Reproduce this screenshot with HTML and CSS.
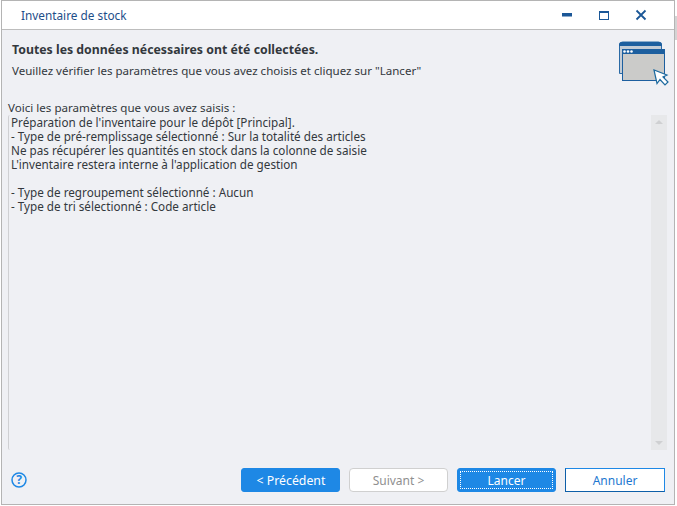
FILE: index.html
```html
<!DOCTYPE html>
<html lang="fr">
<head>
<meta charset="utf-8">
<title>Inventaire de stock</title>
<link rel="stylesheet" href="styles.css">
</head>
<body>
<div class="window">
  <header class="titlebar">
    <span class="title">Inventaire de stock</span>
    <div class="controls">
      <svg class="ctl" width="16" height="16" viewBox="0 0 16 16"><rect x="1" y="6" width="10" height="3.500" fill="#1b5797"/></svg>
      <svg class="ctl" width="16" height="16" viewBox="0 0 16 16"><rect x="1.500" y="4.500" width="9" height="8" fill="none" stroke="#1b5797"/><rect x="1" y="4" width="10" height="2" fill="#1b5797"/></svg>
      <svg class="ctl" width="16" height="16" viewBox="0 0 16 16"><path d="M1.500 3.500 L10.500 12.500 M10.500 3.500 L1.500 12.500" stroke="#1b5797" stroke-width="1.800" fill="none"/></svg>
    </div>
  </header>
  <section class="intro">
    <div class="intro-text">
      <h1 class="heading">Toutes les données nécessaires ont été collectées.</h1>
      <p class="sub">Veuillez vérifier les paramètres que vous avez choisis et cliquez sur "Lancer"</p>
    </div>
    <svg class="wizard-icon" width="50" height="46" viewBox="0 0 50 46">
      <path d="M0.500 5 q0-3 3-3 h36 q3 0 3 3 v28.500 h-42z" fill="#c3ccd6" stroke="#2a6aa5"/>
      <path d="M0 5 q0-3 3-3 h37 q3 0 3 3 v1 H0z" fill="#1d5f9f"/>
      <rect x="3.500" y="9.500" width="42" height="31" fill="#cbcbc9" stroke="#1d5f9f"/>
      <rect x="3" y="9" width="43" height="5" fill="#1d5f9f"/>
      <circle cx="5.500" cy="11.500" r="1.300" fill="#fff"/><circle cx="9" cy="11.500" r="1.300" fill="#fff"/><circle cx="12.500" cy="11.500" r="1.300" fill="#fff"/>
      <path d="M35 30 L38 43.500 L41 39.500 L46 45 L49 42 L44 37 L48 35Z" fill="#fff" stroke="#1d6a9f" stroke-width="1.200"/>
    </svg>
  </section>
  <p class="label">Voici les paramètres que vous avez saisis :</p>
  <div class="panel">
    <div class="content">
      <div>Préparation de l'inventaire pour le dépôt [Principal].</div>
      <div>- Type de pré-remplissage sélectionné : Sur la totalité des articles</div>
      <div>Ne pas récupérer les quantités en stock dans la colonne de saisie</div>
      <div>L'inventaire restera interne à l'application de gestion</div>
      <div>&nbsp;</div>
      <div>- Type de regroupement sélectionné : Aucun</div>
      <div>- Type de tri sélectionné : Code article</div>
    </div>
    <div class="scrollbar">
      <span class="arrow up"></span>
      <span class="arrow down"></span>
    </div>
  </div>
  <footer class="footer">
    <svg class="help" width="18" height="18" viewBox="0 0 18 18"><circle cx="9" cy="9" r="7" fill="none" stroke="#1e88e5" stroke-width="1.500"/><text class="help-mark" x="9" y="13" text-anchor="middle">?</text></svg>
    <div class="buttons">
      <button class="btn primary wide">&lt; Précédent</button>
      <button class="btn disabled">Suivant &gt;</button>
      <button class="btn primary focused"><span class="focus-ring">Lancer</span></button>
      <button class="btn outline">Annuler</button>
    </div>
  </footer>
</div>
<div class="edge-scrap"></div>
</body>
</html>
```
FILE: styles.css
```css
* { box-sizing: border-box; }
html, body { margin: 0; padding: 0; background: #fff; }
body { position: relative; width: 677px; height: 506px; overflow: hidden; font-family: "Noto Sans", sans-serif; font-size: 11.700px; color: #33383d; }
.window { margin: 0 2px 0 1px; width: 674px; height: 505px; background: #eff0f4; border: 1px solid #b4b4b4; display: flex; flex-direction: column; }
.edge-scrap { position: absolute; left: 675px; top: 16px; width: 2px; height: 24px; background: #d4d4d4; }
.titlebar { height: 29px; background: #fff; border-bottom: 1px solid #bdbdbd; display: flex; align-items: center; justify-content: space-between; padding-left: 19px; flex: none; }
.title { color: #1d4e89; font-size: 11.800px; }
.controls { display: flex; gap: 21px; padding-right: 23px; }
.ctl { display: block; }
.intro { height: 70px; flex: none; display: flex; justify-content: space-between; padding: 11px 5px 0 10px; }
.heading { margin: 0; font-size: 12.300px; font-weight: 700; line-height: 17px; color: #33383d; }
.sub { margin: 4px 0 0; line-height: 17px; font-size: 11.550px; }
.wizard-icon { display: block; margin-top: -1px; }
.label { margin: 0; padding: 1px 0 0 6px; height: 15px; line-height: 14px; flex: none; font-size: 11.600px; }
.panel { flex: none; height: 335px; margin: 0 6px; display: flex; border-left: 1px solid #cfd0d3; border-radius: 2px 0 0 2px; }
.content { flex: 1; padding: 0 0 0 2px; line-height: 14px; }
.scrollbar { width: 16px; margin-right: 1px; background: #e7e8ea; display: flex; flex-direction: column; justify-content: space-between; align-items: center; padding: 5px 0; }
.arrow { width: 0; height: 0; border-left: 4px solid transparent; border-right: 4px solid transparent; }
.arrow.up { border-bottom: 4px solid #cfd0d2; }
.arrow.down { border-top: 4px solid #cfd0d2; }
.footer { flex: 1; display: flex; align-items: center; justify-content: space-between; padding: 5px 9px 0 8px; }
.help { display: block; }
.help-mark { font-family: "Noto Sans", sans-serif; font-size: 12px; font-weight: 700; fill: #1e88e5; }
.buttons { display: flex; gap: 9px; }
.btn { width: 99px; height: 24px; font-family: inherit; font-size: 12px; padding: 1px 0 0; border-radius: 3px; display: flex; align-items: center; justify-content: center; }
.wide { font-size: 12.300px; padding-left: 1px; }
.primary { background: #1e88e5; color: #fff; border: 1px solid #1e88e5; }
.disabled { background: #fff; color: #8f8f8f; border: 1px solid #d0d0d0; border-radius: 4px; }
.focused { padding: 0; }
.focus-ring { width: 93px; height: 18px; border: 1px dotted #fff; display: flex; align-items: center; justify-content: center; padding-top: 1px; }
.outline { width: 100px; background: #fff; color: #1e78d0; border: 1px solid #1e88e5; border-bottom-color: #0e5fa8; border-left-color: #0e5fa8; border-radius: 0; }
```
